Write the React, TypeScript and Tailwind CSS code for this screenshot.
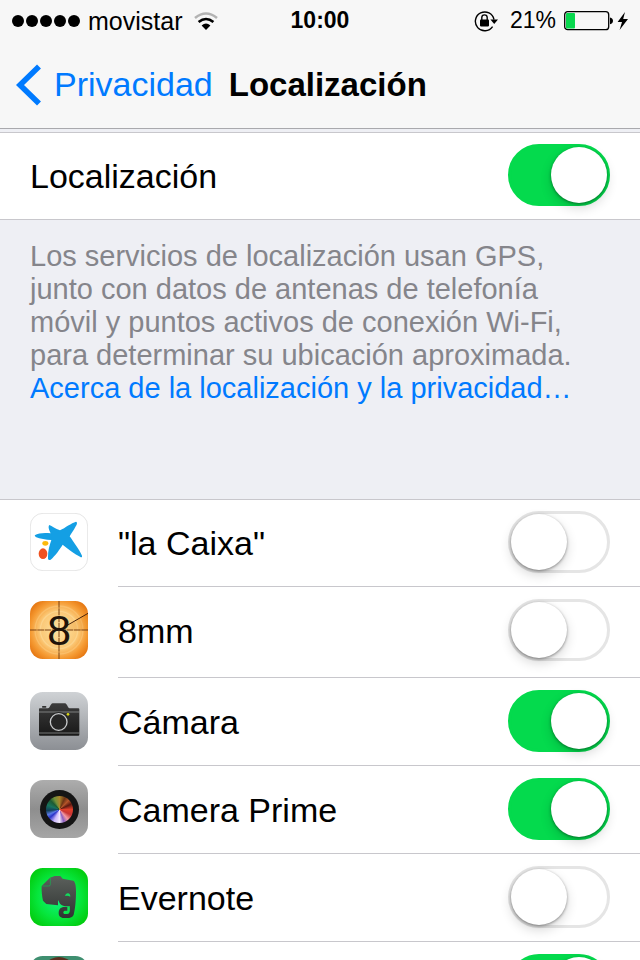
import type { ReactNode } from "react";

type AppRow = {
  id: string;
  name: string;
  enabled: boolean;
  icon: ReactNode;
  height: string;
};

function Toggle({ id, on, label }: { id: string; on: boolean; label?: string }) {
  return (
    <input
      id={id}
      type="checkbox"
      role="switch"
      aria-label={label}
      defaultChecked={on}
      className="relative h-[62px] w-[102px] shrink-0 appearance-none rounded-full border-[3px] border-[#e5e5e5] bg-white before:absolute before:top-0 before:left-0 before:size-14 before:rounded-full before:bg-white before:shadow-[0_5px_12px_rgba(0,0,0,0.16),0_1px_3px_rgba(0,0,0,0.4)] checked:border-[#04da4d] checked:bg-[#04da4d] checked:before:left-10"
    />
  );
}

function CaixaIcon() {
  return (
    <svg viewBox="0 0 174 174" className="size-[58px]">
      <rect x="1" y="1" width="172" height="172" rx="38" fill="#fff" stroke="#e6e6e6" strokeWidth="3" />
      <path
        d="M14 67C26 60 42 59 62 61C58 52 53 42 58 36C66 38 76 48 90 52C106 44 124 30 138 26C143 28 141 34 136 42C131 52 124 61 119 70C130 86 148 110 156 128C157 133 154 134 150 131C132 122 114 107 98 95C90 108 76 128 62 140C56 143 53 140 54 132C54 114 58 98 64 81C48 80 30 78 17 72Z"
        fill="#149fe4"
      />
      <ellipse cx="46" cy="91" rx="9" ry="7" fill="#fcb90c" />
      <ellipse cx="39" cy="122" rx="13" ry="16" fill="#ef5220" />
    </svg>
  );
}

function EightIcon() {
  return (
    <svg viewBox="0 0 174 174" className="size-[58px]">
      <defs>
        <radialGradient id="film" cx="0.5" cy="0.5" r="0.68">
          <stop offset="0" stopColor="#fde3a4" />
          <stop offset="0.5" stopColor="#fbc673" />
          <stop offset="0.72" stopColor="#f59a32" />
          <stop offset="1" stopColor="#dd6400" />
        </radialGradient>
      </defs>
      <rect width="174" height="174" rx="38" fill="url(#film)" />
      <circle cx="87" cy="87" r="72" fill="none" stroke="#ffd58d" strokeOpacity="0.4" strokeWidth="4" />
      <circle cx="87" cy="87" r="56" fill="none" stroke="#ffe6b0" strokeOpacity="0.4" strokeWidth="4" />
      <path d="M87 87L174 38V87Z" fill="#d97200" fillOpacity="0.15" />
      <path d="M87 0V174M0 87H174" stroke="#7b4010" strokeWidth="3" strokeDasharray="20 2" />
      <path d="M108 75L174 37" stroke="#4a240a" strokeWidth="3" />
      <text x="87" y="132" textAnchor="middle" fontSize="128" fill="#20130a" className="font-['Liberation_Sans',sans-serif]">
        8
      </text>
    </svg>
  );
}

function CameraIcon() {
  return (
    <svg viewBox="0 0 174 174" className="size-[58px]">
      <defs>
        <linearGradient id="steel" x1="0" y1="0" x2="0" y2="1">
          <stop offset="0" stopColor="#cfd2d5" />
          <stop offset="1" stopColor="#8c8f94" />
        </linearGradient>
        <linearGradient id="body" x1="0" y1="0" x2="0" y2="1">
          <stop offset="0" stopColor="#3c3c3c" />
          <stop offset="1" stopColor="#181818" />
        </linearGradient>
      </defs>
      <rect width="174" height="174" rx="38" fill="url(#steel)" />
      <path
        d="M29 49H54C60 49 61 35 68 34H105C112 35 113 49 119 49H145Q148 49 148 52V128Q148 131 145 131H30Q27 131 27 128V52Q27 49 29 49Z"
        fill="url(#body)"
      />
      <rect x="36" y="42" width="13" height="5" rx="2" fill="#333" />
      <path d="M27 60H148M27 123H148" stroke="#a4a6a8" strokeWidth="2" />
      <circle cx="86" cy="90" r="30" fill="#262626" />
      <circle cx="86" cy="90" r="25" fill="none" stroke="#c8cacc" strokeWidth="4" />
      <circle cx="114" cy="67" r="4" fill="#d8d416" />
    </svg>
  );
}

function PrimeIcon() {
  return (
    <div className="flex size-[58px] items-center justify-center rounded-[13px] bg-linear-to-b from-[#adadad] via-[#8e8e8e] to-[#a6a6a6]">
      <div className="flex size-[39px] items-center justify-center rounded-full bg-[#151515]">
        <div className="size-[27px] rounded-full bg-[conic-gradient(#a8842c,#6d3414_25deg,#b5552a_45deg,#5d1a10_65deg,#e2402b_90deg,#c93535_115deg,#f39aa5_140deg,#8b5fc0_160deg,#f4e9ff_180deg,#c9b6fb_205deg,#2a32c8_230deg,#5a7be8_245deg,#12405a_265deg,#17745e_290deg,#1d5b33_315deg,#71913a_335deg,#a8842c)]" />
      </div>
    </div>
  );
}

function EvernoteIcon() {
  return (
    <svg viewBox="0 0 174 174" className="size-[58px]">
      <defs>
        <radialGradient id="leaf" cx="0.5" cy="0.5" r="0.62">
          <stop offset="0" stopColor="#10f58a" />
          <stop offset="0.6" stopColor="#06e63c" />
          <stop offset="1" stopColor="#02cb0c" />
        </radialGradient>
        <linearGradient id="hide" x1="0" y1="0" x2="0" y2="1">
          <stop offset="0" stopColor="#5b605c" />
          <stop offset="1" stopColor="#303432" />
        </linearGradient>
      </defs>
      <rect width="174" height="174" rx="38" fill="url(#leaf)" />
      <path
        d="M35 54L60 29L74 24H91L98 32L130 38C136 42 138 54 138 70C138 96 136 122 131 140C129 147 122 150 109 150H102C90 150 86 143 86 135C86 124 92 117 103 117H112V128H104C99 129 98 138 105 138H112C119 138 121 130 119 114C108 116 97 114 90 107L84 96V112L49 108L39 98C36 86 34 66 35 54Z"
        fill="url(#hide)"
      />
      <path d="M37 54H56Q61 54 61 50V30" fill="none" stroke="#13b552" strokeWidth="2" />
      <path d="M105 84Q107 75 114 76Q121 77 121 86Q113 81 105 84Z" fill="#12dc5c" />
    </svg>
  );
}

function PortraitIcon() {
  return (
    <svg viewBox="0 0 174 174" className="size-[58px]">
      <rect width="174" height="174" rx="38" fill="#3f8f70" />
      <ellipse cx="87" cy="70" rx="58" ry="67" fill="#5b3020" />
    </svg>
  );
}

const apps: AppRow[] = [
  { id: "caixa", name: '"la Caixa"', enabled: false, icon: <CaixaIcon />, height: "h-[87px]" },
  { id: "8mm", name: "8mm", enabled: false, icon: <EightIcon />, height: "h-[91px]" },
  { id: "camara", name: "Cámara", enabled: true, icon: <CameraIcon />, height: "h-[88px]" },
  { id: "prime", name: "Camera Prime", enabled: true, icon: <PrimeIcon />, height: "h-[88px]" },
  { id: "evernote", name: "Evernote", enabled: false, icon: <EvernoteIcon />, height: "h-[88px]" },
  { id: "next", name: "", enabled: true, icon: <PortraitIcon />, height: "h-[88px]" },
];

function StatusBar() {
  return (
    <div className="grid h-[41px] grid-cols-[1fr_auto_1fr] items-center px-3 text-[23px]">
      <div className="flex items-center gap-2">
        <div className="flex gap-[2px]">
          {[0, 1, 2, 3, 4].map((dot) => (
            <span key={dot} className="size-3 rounded-full bg-black" />
          ))}
        </div>
        <span className="text-[25px] leading-10">movistar</span>
        <svg viewBox="0 0 24 18" className="ml-1 h-[18px] w-6" fill="none">
          <path d="M1 6Q12 -3 23 6" stroke="#b3b3b3" strokeWidth="2.6" />
          <path d="M4.6 10Q12 4 19.4 10" stroke="#000" strokeWidth="2.6" />
          <path d="M7.6 13.4Q12 9.6 16.4 13.4L12 18Z" fill="#000" />
        </svg>
      </div>
      <span className="font-bold">10:00</span>
      <div className="flex items-center justify-end">
        <svg viewBox="0 0 24 22" className="mr-3 h-[22px] w-6" fill="none">
          <path d="M18.6 16.6A9.4 9.4 0 1 1 20 9.6" stroke="#000" strokeWidth="1.4" />
          <path d="M16.4 9.4H24L20.2 14Z" fill="#000" />
          <rect x="6" y="9.6" width="9" height="6.8" rx="0.8" fill="#000" />
          <path d="M7.8 10V7.6a2.7 2.7 0 0 1 5.4 0V10" stroke="#000" strokeWidth="1.4" />
        </svg>
        <span>21%</span>
        <svg viewBox="0 0 64 20" className="ml-2 h-5 w-16">
          <rect x="0.7" y="0.7" width="44" height="18" rx="3" fill="none" stroke="#000" strokeWidth="1.3" />
          <rect x="2" y="2" width="9" height="15.4" rx="1" fill="#08d84e" />
          <path d="M46 6.4Q49 7 49 9.8T46 13.2Z" fill="#000" />
          <path d="M61 1L53.6 11H58L55.6 19L64 8H59.2Z" fill="#000" />
        </svg>
      </div>
    </div>
  );
}

export default function App() {
  return (
    <main className="h-screen overflow-hidden bg-[#eeeff4] font-['Liberation_Sans',Arial,sans-serif] text-black">
      <header className="border-b border-[#a9a9ad] bg-[#f7f7f7]">
        <StatusBar />
        <nav className="flex h-[87px] items-center pl-4">
          <button type="button" className="flex items-center gap-3 text-[34px] text-[#007aff]">
            <svg viewBox="0 0 26 42" className="h-[42px] w-[26px]" fill="none">
              <path d="M23 2.4L4 21L23 39.6" stroke="#007aff" strokeWidth="5.6" />
            </svg>
            Privacidad
          </button>
          <h1 className="ml-4 text-[33px] font-bold">Localización</h1>
        </nav>
      </header>

      <section className="mt-[3px] flex h-22 items-start border-y border-[#c8c7cc] bg-white px-[30px] pt-[11px]">
        <label htmlFor="location" className="flex-1 text-[34px] leading-16">
          Localización
        </label>
        <Toggle id="location" on />
      </section>

      <section className="h-[279px] px-[30px] pt-5 text-[29px] leading-[33px] text-[#85858b]">
        <p>
          Los servicios de localización usan GPS,
          <br />
          junto con datos de antenas de telefonía
          <br />
          móvil y puntos activos de conexión Wi-Fi,
          <br />
          para determinar su ubicación aproximada.
        </p>
        <a href="#privacidad" className="text-[#007aff]">
          Acerca de la localización y la privacidad…
        </a>
      </section>

      <ul className="bg-white">
        {apps.map((app, index) => (
          <li
            key={app.id}
            className={`flex gap-[30px] pl-[30px] ${app.height} ${index === 0 ? "border-t border-[#c8c7cc]" : ""}`}
          >
            <div className={index === 0 ? "pt-[13px]" : "pt-[15px]"}>{app.icon}</div>
            <div
              className={`flex flex-1 items-start pr-[30px] ${index === 0 ? "pt-[11px]" : "border-t border-[#c8c7cc] pt-3"}`}
            >
              <label htmlFor={app.id} className="flex-1 text-[34px] leading-16">
                {app.name}
              </label>
              <Toggle id={app.id} on={app.enabled} label={app.name ? undefined : "App"} />
            </div>
          </li>
        ))}
      </ul>
    </main>
  );
}
